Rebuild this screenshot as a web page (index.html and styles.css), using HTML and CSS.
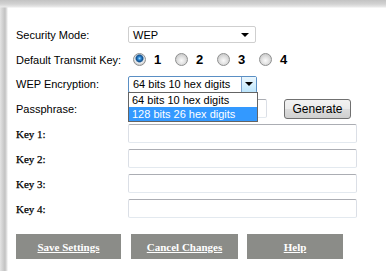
FILE: index.html
```html
<!DOCTYPE html>
<html lang="en">
<head>
  <meta charset="UTF-8" />
  <title>Wireless Security</title>
  <link rel="stylesheet" href="styles.css">
</head>
<body>
  <div class="page">
    <form class="settings">
      <span class="label">Security Mode:</span>
      <div class="field">
        <div class="select select-mode"><span>WEP</span><span class="caret"></span></div>
      </div>

      <span class="label">Default Transmit Key:</span>
      <div class="field radios">
        <label class="radio"><input type="radio" name="txkey" checked><b>1</b></label>
        <label class="radio"><input type="radio" name="txkey"><b>2</b></label>
        <label class="radio"><input type="radio" name="txkey"><b>3</b></label>
        <label class="radio"><input type="radio" name="txkey"><b>4</b></label>
      </div>

      <span class="label">WEP Encryption:</span>
      <div class="field">
        <div class="select select-enc open">
          <span>64 bits 10 hex digits</span>
          <span class="drop"><span class="caret"></span></span>
          <ul class="options">
            <li>64 bits 10 hex digits</li>
            <li class="active">128 bits 26 hex digits</li>
          </ul>
        </div>
      </div>

      <span class="label">Passphrase:</span>
      <div class="field">
        <input type="text" class="text pass">
        <button type="button" class="generate">Generate</button>
      </div>

      <span class="label key">Key 1:</span>
      <div class="field"><input type="text" class="text key-input"></div>
      <span class="label key">Key 2:</span>
      <div class="field"><input type="text" class="text key-input"></div>
      <span class="label key">Key 3:</span>
      <div class="field"><input type="text" class="text key-input"></div>
      <span class="label key">Key 4:</span>
      <div class="field"><input type="text" class="text key-input"></div>
    </form>

    <div class="actions">
      <a href="#" class="action save">Save Settings</a>
      <a href="#" class="action cancel">Cancel Changes</a>
      <a href="#" class="action help">Help</a>
    </div>
  </div>
</body>
</html>
```

FILE: styles.css
```css
html, body {
  margin: 0;
  padding: 0;
}
body {
  font-family: 'Liberation Sans', Arial, sans-serif;
  font-size: 11px;
  color: #000;
  background: #fff;
}
.page {
  width: 386px;
  height: 271px;
  box-sizing: border-box;
  padding: 22px 0 0 16px;
  background:
    linear-gradient(to bottom, #c3c3c3 0, #d2d2d2 4px, #e9e9e9 7px, rgba(255,255,255,0) 8px) top left / 100% 8px no-repeat,
    linear-gradient(to right, #e4e4e4 0, #cfcfcf 3px, #c2c2c2 5px, #e6e6e6 7px, rgba(255,255,255,0) 8px) top left / 8px 100% no-repeat,
    #fff;
}
.settings {
  display: grid;
  grid-template-columns: 112px 1fr;
  grid-template-rows: 25px 25px 24px 25px 25px 25px 25px 25px;
  margin: 0;
}
.label {
  display: flex;
  align-items: center;
}
.label.key {
  font-family: 'Liberation Serif', 'Times New Roman', serif;
  font-size: 11px;
  -webkit-text-stroke: 0.25px #000;
}
.field {
  display: flex;
  align-items: center;
  position: relative;
}
.select {
  height: 17px;
  box-sizing: border-box;
  border: 1px solid #cfcfcf;
  border-radius: 2px;
  display: flex;
  align-items: center;
  padding-left: 4px;
  background: #fff;
  position: relative;
}
.select-mode {
  width: 128px;
  justify-content: space-between;
  padding-right: 6px;
}
.caret {
  width: 0;
  height: 0;
  border-left: 4px solid transparent;
  border-right: 4px solid transparent;
  border-top: 4px solid #000;
}
.select-enc {
  width: 129px;
  border-color: #5a8fc4;
  padding-right: 0;
  justify-content: space-between;
}
.drop {
  width: 15px;
  height: 15px;
  box-sizing: border-box;
  border-left: 1px solid #7da2ce;
  background: linear-gradient(#eaf6fd, #d7effc 50%, #bce5fc);
  display: flex;
  align-items: center;
  justify-content: center;
}
.options {
  position: absolute;
  top: 15px;
  left: -1px;
  width: 130px;
  box-sizing: border-box;
  margin: 0;
  padding: 0;
  list-style: none;
  border: 1px solid #646464;
  background: #fff;
  z-index: 2;
}
.options li {
  height: 14px;
  line-height: 14px;
  padding-left: 3px;
}
.options li.active {
  background: #3399ff;
  color: #fff;
}
.radios {
  padding-left: 5px;
}
.radio {
  display: inline-flex;
  align-items: center;
  width: 42px;
}
.radio input {
  -webkit-appearance: none;
  appearance: none;
  margin: 0 8px 0 0;
  width: 13px;
  height: 13px;
  border-radius: 50%;
  border: 1px solid #8e8f8f;
  box-sizing: border-box;
  background: radial-gradient(circle at 50% 60%, #fafafa 0, #e6e6e6 3px, #cfcfcf 6px);
}
.radio input:checked {
  background: radial-gradient(circle at 50% 40%, #a5dcff 0, #2a88d8 1.6px, #17518a 3.2px, #5a8ab6 3.8px, #f2f2f2 4.6px, #d0d0d0 6px);
}
.radio b {
  font-family: 'Liberation Sans', Arial, sans-serif;
  font-size: 13px;
  font-weight: bold;
}
.text {
  height: 19px;
  box-sizing: border-box;
  margin: 0;
  padding: 0 3px;
  border: 1px solid #dbdfe6;
  border-top-color: #abadb3;
  border-bottom-color: #e3e9ef;
  border-radius: 2px;
  background: #fff;
  font: inherit;
}
.pass {
  width: 139px;
}
.key-input {
  width: 229px;
}
.generate {
  margin-left: 17px;
  width: 67px;
  height: 20px;
  padding: 0;
  border: 1px solid #707070;
  border-radius: 3px;
  background: linear-gradient(#f2f2f2, #ebebeb 50%, #dddddd 51%, #cfcfcf);
  font-family: 'Liberation Sans', Arial, sans-serif;
  font-size: 12px;
  color: #000;
}
.actions {
  display: flex;
  gap: 9px;
  margin-top: 13px;
}
.action {
  height: 25px;
  display: flex;
  align-items: center;
  justify-content: center;
  background: #8b8c88;
  color: #fff;
  font-family: 'Liberation Serif', 'Times New Roman', serif;
  font-weight: bold;
  font-size: 11px;
}
.save {
  width: 105px;
  margin-right: 1px;
}
.cancel {
  width: 107px;
}
.help {
  width: 96px;
}
```
